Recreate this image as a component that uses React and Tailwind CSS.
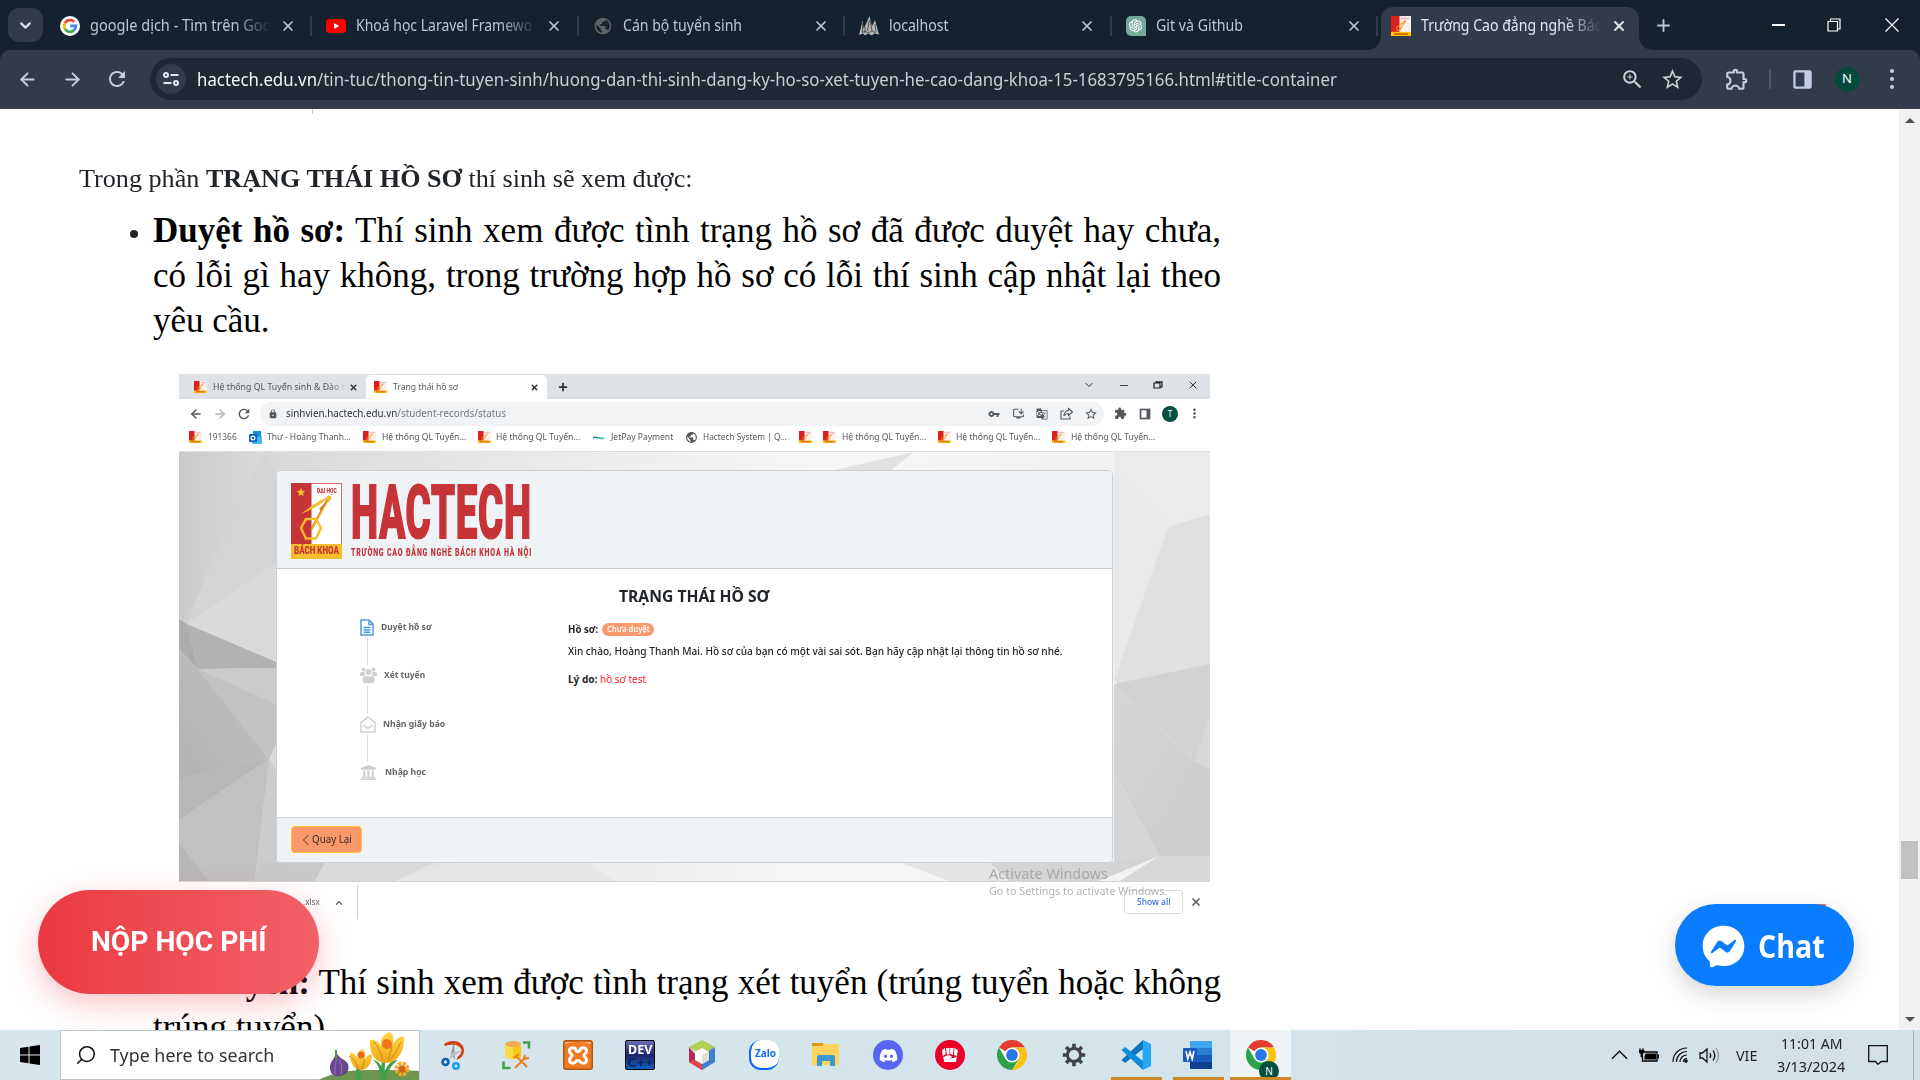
import React, { useLayoutEffect, useRef } from "react";
import {
  MdZoomIn, MdStarOutline, MdOutlineExtension, MdPublic, MdLock, MdRefresh,
  MdVpnKey, MdInstallDesktop, MdGTranslate, MdExtension, MdMoreVert,
} from "react-icons/md";
import { FaDiscord, FaFacebookMessenger, FaUniversity } from "react-icons/fa";
import { AiOutlineOpenAI } from "react-icons/ai";
import { ArrowLeft, ArrowRight, X, Plus, ChevronDown, ChevronUp, Search } from "lucide-react";

/* One line of text stretched to the width of its box. */
function Fit({ className = "", children }) {
  const outer = useRef(null);
  const inner = useRef(null);
  useLayoutEffect(() => {
    const apply = () => {
      if (!outer.current || !inner.current) return;
      const k = outer.current.clientWidth / inner.current.offsetWidth;
      inner.current.style.transform = `scaleX(${k})`;
    };
    apply();
    if (document.fonts) document.fonts.ready.then(apply);
  }, []);
  return (
    <span ref={outer} className={"flex shrink-0 whitespace-nowrap " + className}>
      <span ref={inner} className="block shrink-0 origin-left">{children}</span>
    </span>
  );
}

function SchoolIcon({ className }) {
  return (
    <svg viewBox="0 0 20 20" preserveAspectRatio="none" className={"shrink-0 " + className}>
      <rect width="20" height="20" fill="#fbeff0" />
      <rect width="8.5" height="16.5" fill="#dc1f1c" />
      <rect y="15.8" width="20" height="4.2" fill="#fbc70c" />
      <path d="M3 18h14" stroke="#d9481c" strokeWidth="1.4" />
      <path d="M10 2.5h8" stroke="#f3b8bd" strokeWidth="1.6" />
      <path d="M15 4.5 8 9.5M15 4.5 9 13" stroke="#ef9d21" strokeWidth="1.1" fill="none" />
      <circle cx="7.7" cy="12.4" r="2.2" stroke="#f5a31d" strokeWidth="1" fill="none" />
    </svg>
  );
}

function GoogleIcon() {
  return (
    <svg viewBox="0 0 20 20" className="h-5 w-5 shrink-0">
      <circle cx="10" cy="10" r="10" fill="#fff" />
      <g fill="none" strokeWidth="2.7">
        <path d="M14.2 5.9A5.9 5.9 0 0 0 4.900 7.100" stroke="#ea4335" />
        <path d="M4.900 7.100a5.900 5.900 0 0 0 0 5.800" stroke="#fbbc05" />
        <path d="M4.900 12.900a5.900 5.900 0 0 0 9 1.400" stroke="#34a853" />
        <path d="M13.900 14.300a5.900 5.900 0 0 0 2-4.400H10.200" stroke="#4285f4" />
      </g>
    </svg>
  );
}

function YoutubeIcon() {
  return (
    <svg viewBox="0 0 20 20" className="h-5 w-5 shrink-0">
      <rect y="3" width="20" height="14" rx="3.4" fill="#f00" />
      <path d="M8 7l5.2 3L8 13z" fill="#fff" />
    </svg>
  );
}

function LocalhostIcon() {
  return (
    <svg viewBox="0 0 20 20" className="h-5 w-5 shrink-0">
      <path d="M0 19 3.600 4.500 4.600 13 10.500 0 13 10 16 4l4 14.500-5-1-2 2-4-2-3 2-2-2z" fill="#b5b5b1" />
      <path d="M3.400 7v9M6 11v6M10.300 4 8.500 15M11 4l2 11M16 8l1 8M3 17l3-2 3 2 4-2 4 2" stroke="#3b4044" strokeWidth=".8" fill="none" />
    </svg>
  );
}

function GptIcon() {
  return (
    <span className="flex h-5 w-5 shrink-0 items-center justify-center rounded-tl-[5px] rounded-tr-[5px] rounded-bl-[5px] bg-[#74a99b] text-white">
      <AiOutlineOpenAI className="h-[17px] w-[17px]" />
    </span>
  );
}

const topTabs = [
  { icon: <GoogleIcon />, text: "google dịch - Tìm trên Goo", w: "w-[181px]", fade: true },
  { icon: <YoutubeIcon />, text: "Khoá học Laravel Framewo", w: "w-[176px]", fade: true },
  { icon: <MdPublic className="h-5 w-5 shrink-0 text-[#5f6468]" />, text: "Cán bộ tuyển sinh", w: "w-[119px]" },
  { icon: <LocalhostIcon />, text: "localhost", w: "w-[60px]" },
  { icon: <GptIcon />, text: "Git và Github", w: "w-[87px]" },
];

function TabStrip() {
  return (
    <div className="flex h-[50px] items-center bg-[#14212e] pl-2 text-[15.500px] text-[#b9c6dc]">
      <button className="flex h-[34px] w-[35px] items-center justify-center rounded-[11px] bg-[#2f3a4a]">
        <ChevronDown className="h-[17px] w-[17px] text-[#d5dff0]" strokeWidth={3.2} />
      </button>
      <div className="ml-[3px] flex pt-px">
        {topTabs.map((t) => (
          <div key={t.text} className="flex w-[266.400px] items-center pl-[14px]">
            {t.icon}
            <div className={"ml-[10px] w-[181px] overflow-hidden " + (t.fade ? "[mask-image:linear-gradient(to_right,#000_80%,transparent)]" : "")}>
              <Fit className={t.w}>{t.text}</Fit>
            </div>
            <X className="ml-[9px] h-4 w-4 shrink-0" strokeWidth={2.6} />
            <span className="ml-auto h-5 w-[2px] bg-[#303b4a]" />
          </div>
        ))}
      </div>
      <div className="relative ml-[3px] mt-[7px] flex h-[43px] w-[258px] shrink-0 items-center rounded-t-[12px] bg-[#313b4b] pb-[6px] pl-[10px] text-[#e3e8f0]">
        <svg viewBox="0 0 14 14" className="absolute bottom-0 -left-[14px] h-[14px] w-[14px]"><path d="M14 0v14H0A14 14 0 0 0 14 0z" fill="#313b4b" /></svg>
        <svg viewBox="0 0 14 14" className="absolute -right-[14px] bottom-0 h-[14px] w-[14px]"><path d="M0 0v14h14A14 14 0 0 1 0 0z" fill="#313b4b" /></svg>
        <SchoolIcon className="h-5 w-5" />
        <div className="ml-[10px] w-[180px] overflow-hidden [mask-image:linear-gradient(to_right,#000_80%,transparent)]">
          <Fit className="w-[180px]">Trường Cao đẳng nghề Bác</Fit>
        </div>
        <X className="ml-[10px] h-4 w-4 shrink-0" strokeWidth={2.8} />
      </div>
      <Plus className="ml-[15px] h-[19px] w-[19px]" strokeWidth={2.4} />
      <span className="ml-[99px] h-[1.500px] w-[13px] bg-white" />
      <svg viewBox="0 0 14 14" className="ml-[42px] h-[14px] w-[14px]" fill="none" stroke="#fff" strokeWidth="1.2"><path d="M1 3.500h9.500V13H1zM3.500 3V1H13v10h-2" /></svg>
      <svg viewBox="0 0 14 14" className="ml-[44px] h-[14px] w-[14px]" stroke="#fff" strokeWidth="1.2"><path d="M.5.5l13 13M13.500.5l-13 13" /></svg>
    </div>
  );
}

function Toolbar() {
  return (
    <div className="h-[59px] bg-[#14212e]">
      <div className="flex h-[59px] items-center rounded-t-[10px] border-b border-[#45434b] bg-[#313b4b] text-[#c0cee6]">
        <ArrowLeft className="ml-[17px] h-[21px] w-[21px]" strokeWidth={2.2} />
        <ArrowRight className="ml-[24px] h-[21px] w-[21px]" strokeWidth={2.2} />
        <MdRefresh className="ml-[22px] h-[24px] w-[24px]" />
        <div className="ml-[21px] flex h-[42px] w-[1552px] items-center rounded-full bg-[#1c2834] pl-[6px]">
          <span className="flex h-[30px] w-[30px] items-center justify-center rounded-full bg-[#313b4b]">
            <svg viewBox="0 0 16 14" className="h-[14px] w-[16px]" fill="none" stroke="#dfe6f2" strokeWidth="2"><circle cx="3" cy="3" r="2" /><path d="M7.500 3H15.500M.5 11h8" /><circle cx="13" cy="11" r="2" /></svg>
          </span>
          <Fit className="ml-[11px] w-[1140px] text-[17.500px] text-[#c9ced6]">
            <span className="text-[#f4f7fb]">hactech.edu.vn</span>/tin-tuc/thong-tin-tuyen-sinh/huong-dan-thi-sinh-dang-ky-ho-so-xet-tuyen-he-cao-dang-khoa-15-1683795166.html#title-container
          </Fit>
          <MdZoomIn className="ml-[283px] h-[25px] w-[25px] text-[#c9cdd6]" />
          <MdStarOutline className="ml-[15px] h-[25px] w-[25px] text-[#c9cdd6]" />
        </div>
        <MdOutlineExtension className="ml-[22px] h-[26px] w-[26px]" />
        <span className="ml-[19px] h-5 w-[1.500px] bg-[#4d5868]" />
        <svg viewBox="0 0 20 20" className="ml-[22px] h-[19px] w-[19px]"><rect x="1.500" y="1.500" width="17" height="17" rx="1" fill="none" stroke="#c0cee6" strokeWidth="2.400" /><path d="M12 1h7v18h-7z" fill="#c0cee6" /></svg>
        <span className="ml-[23px] flex h-[25px] w-[25px] items-center justify-center rounded-full bg-[#00493c] text-[13px] text-white">N</span>
        <svg viewBox="0 0 6 22" className="ml-[29px] h-[22px] w-[6px]" fill="#c0cee6"><circle cx="3" cy="3" r="2.100" /><circle cx="3" cy="11" r="2.100" /><circle cx="3" cy="19" r="2.100" /></svg>
      </div>
    </div>
  );
}

const bookmarks = [
  { k: "s", t: "191366", w: "w-[29px]", ml: "ml-[10px]" },
  { k: "o", t: "Thư - Hoàng Thanh...", w: "w-[84px]", ml: "ml-[12px]" },
  { k: "s", t: "Hệ thống QL Tuyển...", w: "w-[84px]", ml: "ml-[12px]" },
  { k: "s", t: "Hệ thống QL Tuyển...", w: "w-[84px]", ml: "ml-[12px]" },
  { k: "j", t: "JetPay Payment", w: "w-[62px]", ml: "ml-[12px]" },
  { k: "g", t: "Hactech System | Q...", w: "w-[84px]", ml: "ml-[12px]" },
  { k: "s", ml: "ml-[12px]" },
  { k: "s", t: "Hệ thống QL Tuyển...", w: "w-[84px]", ml: "ml-[11px]" },
  { k: "s", t: "Hệ thống QL Tuyển...", w: "w-[84px]", ml: "ml-[12px]" },
  { k: "s", t: "Hệ thống QL Tuyển...", w: "w-[84px]", ml: "ml-[12px]" },
];

function BookmarkIcon({ kind }) {
  if (kind === "o")
    return (
      <svg viewBox="0 0 13 13" className="h-[13px] w-[13px] shrink-0"><path d="M4 0h8v9H4z" fill="#1490df" /><path d="M3 7l10-2v8H3z" fill="#41b7f0" /><rect y="3" width="8" height="8" rx="1" fill="#0f63b8" /><circle cx="4" cy="7" r="1.900" stroke="#fff" strokeWidth="1.200" fill="none" /></svg>
    );
  if (kind === "j")
    return (
      <svg viewBox="0 0 13 13" className="h-[13px] w-[13px] shrink-0" fill="none" strokeWidth="1.600"><path d="M1 7c2-1.500 3-1 5 0" stroke="#4a74a8" /><path d="M6 6.500c3 1.500 4 1 6 .5" stroke="#2fc59c" /></svg>
    );
  if (kind === "g") return <MdPublic className="h-[13px] w-[13px] shrink-0 text-[#55595e]" />;
  return <SchoolIcon className="h-[12px] w-[13px]" />;
}

function InnerChrome() {
  return (
    <div className="font-['Noto_Sans',sans-serif] text-[9.500px] text-[#54585d]">
      <div className="flex h-[25px] items-center bg-[#dee1e6] pt-px">
        <SchoolIcon className="ml-[15px] h-[12px] w-[13px]" />
        <div className="ml-[6px] w-[133px] overflow-hidden [mask-image:linear-gradient(to_right,#000_88%,transparent)]">
          <Fit className="w-[132px]">Hệ thống QL Tuyển sinh &amp; Đào t</Fit>
        </div>
        <X className="ml-[3px] h-[9px] w-[9px] shrink-0 text-[#333]" strokeWidth={4} />
        <div className="ml-[8px] flex h-[24px] w-[181px] items-center rounded-t-[5px] bg-white pl-[8px]">
          <SchoolIcon className="h-[12px] w-[13px]" />
          <Fit className="ml-[6px] w-[65px]">Trạng thái hồ sơ</Fit>
          <X className="ml-[72px] h-[9px] w-[9px] text-[#333]" strokeWidth={4} />
        </div>
        <Plus className="ml-[10px] h-[12px] w-[12px] text-[#333]" strokeWidth={3.500} />
        <ChevronDown className="mb-[4px] ml-[514px] h-[12px] w-[12px] text-[#333]" />
        <span className="mb-[4px] ml-[25px] h-px w-[8px] bg-[#444]" />
        <svg viewBox="0 0 10 8" className="mb-[4px] ml-[25px] h-[8px] w-[10px]" fill="none" stroke="#222" strokeWidth="1.200"><path d="M1 2h6v5H1zM3 2V.8h6v5H7" /></svg>
        <X className="mb-[4px] ml-[24px] h-[12px] w-[12px] text-[#333]" strokeWidth={2} />
      </div>
      <div className="flex h-[29px] items-center bg-white">
        <ArrowLeft className="ml-[10px] h-[14px] w-[14px]" strokeWidth={2.600} />
        <ArrowRight className="ml-[10px] h-[14px] w-[14px] text-[#b3b6ba]" strokeWidth={2.400} />
        <MdRefresh className="ml-[9px] h-[16px] w-[16px]" />
        <div className="ml-[8px] flex h-[24px] w-[844px] items-center rounded-full bg-[#f1f3f4] pl-[8px]">
          <MdLock className="h-[10px] w-[10px]" />
          <Fit className="ml-[8px] w-[220px] text-[10px] text-[#75797e]"><span className="text-[#303338]">sinhvien.hactech.edu.vn</span>/student-records/status</Fit>
          <MdVpnKey className="ml-[482px] h-[12px] w-[12px]" />
          <MdInstallDesktop className="ml-[12px] h-[13px] w-[13px]" />
          <MdGTranslate className="ml-[11px] h-[12px] w-[12px]" />
          <svg viewBox="0 0 13 13" className="ml-[12px] h-[13px] w-[13px]" fill="none" stroke="#54585d" strokeWidth="1.100"><path d="M4 4H1v8h9V9.500M8.500 1.500l4 3.500-4 3.500V6.500C6.500 6.500 5 7 3.800 9c.2-3 2-5 4.700-5.500z" /></svg>
          <MdStarOutline className="ml-[11px] h-[14px] w-[14px]" />
        </div>
        <MdExtension className="ml-[10px] h-[13px] w-[13px]" />
        <svg viewBox="0 0 12 12" className="ml-[12px] h-[12px] w-[12px]"><rect x="1.500" y="1.500" width="9" height="9" fill="none" stroke="#54585d" strokeWidth="1.700" /><path d="M7.500 1.500h3v9h-3z" fill="#54585d" /></svg>
        <span className="ml-[11px] flex h-[16px] w-[16px] items-center justify-center rounded-full bg-[#04513f] text-[8px] text-white">T</span>
        <MdMoreVert className="ml-[9px] h-[15px] w-[15px]" />
      </div>
      <div className="flex h-[24px] items-center border-b border-[#d9dbde] bg-white pb-[5px]">
        {bookmarks.map((b, i) => (
          <div key={i} className={"flex items-center " + b.ml}>
            <BookmarkIcon kind={b.k} />
            {b.t && <Fit className={"ml-[5.500px] " + b.w}>{b.t}</Fit>}
          </div>
        ))}
      </div>
    </div>
  );
}

function Facets() {
  return (
    <svg viewBox="0 0 1031 429" className="absolute inset-0 h-full w-full" preserveAspectRatio="none">
      <defs>
        <linearGradient id="base" x1="0" x2="1" y1="0" y2="0">
          <stop offset="0" stopColor="#d2d2d2" /><stop offset=".28" stopColor="#e6e6e6" /><stop offset=".62" stopColor="#f7f7f7" /><stop offset="1" stopColor="#f0f0f0" />
        </linearGradient>
        <linearGradient id="left" x1="0" x2="1" y1="0" y2="0"><stop offset="0" stopColor="#cbcbcb" /><stop offset="1" stopColor="#dadada" /></linearGradient>
        <linearGradient id="dark" x1="0" x2="1" y1="1" y2="0"><stop offset="0" stopColor="#b2b2b2" /><stop offset="1" stopColor="#c3c3c3" /></linearGradient>
        <linearGradient id="right" x1="0" x2="1" y1="0" y2="1"><stop offset="0" stopColor="#d6d6d6" /><stop offset="1" stopColor="#cbcbcb" /></linearGradient>
      </defs>
      <rect width="1031" height="429" fill="url(#base)" />
      <path d="M0 0h85L30 118 8 172 0 167z" fill="url(#left)" />
      <path d="M30 118 85 0l12 18v192L8 172z" fill="#d5d5d5" />
      <path d="M8 172 97 110v100z" fill="#dadada" />
      <path d="M0 167l8 5 11 45-19-20z" fill="#acacac" />
      <path d="M8 172l89 38v6l-78 1z" fill="#b2b2b2" />
      <path d="M19 217l78-1v36z" fill="#cbcbcb" />
      <path d="M19 217l78 35v40l-7 15z" fill="#c2c2c2" />
      <path d="M0 197l19 20 71 90-90 20z" fill="url(#dark)" />
      <path d="M90 307 0 327v41z" fill="#b7b7b7" />
      <path d="M90 307 0 368v61h76z" fill="#c1c1c1" />
      <path d="M0 391l30 38H0z" fill="#b7b7b7" />
      <path d="M90 307l7 12v110H76z" fill="#cccccc" />
      <path d="M76 429l5-19h65l-10 19z" fill="#c9c9c9" />
      <path d="M146 410h110l-40 19h-80z" fill="#d9d9d9" />
      <path d="M216 429l60-19h130l30 19z" fill="#e6e6e6" />
      <path d="M655 18 735 0l-23 18z" fill="#e2e2e2" />
      <path d="M1031 62l-42 13-19 53-35 100V0h96z" fill="#ebebeb" />
      <path d="M1031 62l-42 13-54 153 4 4 92-20z" fill="#e0e0e0" />
      <path d="M935 18l54 57-19 53-35 100z" fill="#e9e9e9" />
      <path d="M935 232l96-20v49l-15 49z" fill="#d2d2d2" />
      <path d="M935 232l81 78 15-49v143h-51l-45-84z" fill="url(#right)" />
      <path d="M1031 261l-15 49 15 8z" fill="#d8d8d8" />
      <path d="M935 320l45 84-45 10z" fill="#d6d6d6" />
      <path d="M1016 310l15 8v86h-44z" fill="#cecece" />
      <path d="M980 404h51v25h-90z" fill="#d8d8d8" />
      <path d="M980 404l-60 25H830l-20-19h120z" fill="#d4d4d4" />
      <path d="M720 410h90l20 19h-60z" fill="#e4e4e4" />
    </svg>
  );
}

function Emblem() {
  return (
    <div className="relative h-[76px] w-[51px] overflow-hidden font-['Roboto',sans-serif] font-black text-[#c73437]">
      <svg viewBox="0 0 51 76" className="absolute inset-0 h-full w-full">
        <rect x=".5" y=".5" width="50" height="75" fill="#fff" stroke="#c73437" strokeWidth=".7" />
        <path d="M0 0h20.500v61H0z" fill="#c73437" />
        <path d="M0 61h51v15H0z" fill="#f4bd2e" />
        <path d="M10 5l1.200 2.800 3 .2-2.300 2 .7 3-2.600-1.600L7.400 13l.7-3-2.300-2 3-.2z" fill="#f6c62f" />
        <path d="M38 14C30 22 22 26 10 31 20 23 30 16 38 14z" fill="#f4bd2e" />
        <path d="M38 14 20 47M39 15 29 27" fill="none" stroke="#c77a2a" strokeWidth="2.200" />
        <path d="M39 14 21 46" stroke="#f4bd2e" strokeWidth="1.400" />
        <path d="M15 36h10l5 9-5 10.500H15L10 45z" fill="none" stroke="#f4bd2e" strokeWidth="2.400" />
        <circle cx="38" cy="15" r="2.500" fill="#f4bd2e" />
      </svg>
      <Fit className="absolute top-[4px] left-[26px] w-[20px] text-[7px] leading-[9px]">ĐẠI HỌC</Fit>
      <Fit className="absolute top-[61px] left-[3px] w-[45px] text-[11px] leading-[14px]">BÁCH KHOA</Fit>
    </div>
  );
}

function PeopleIcon() {
  return (
    <svg viewBox="0 0 17 17" className="h-[17px] w-[17px]" fill="#cfcfcf">
      <circle cx="3.500" cy="2.500" r="2" /><circle cx="13.500" cy="2.500" r="2" /><circle cx="8.500" cy="5" r="3" />
      <path d="M0 9V7q0-2 2-2h2.500q-.5 3 1.500 4zM17 9V7q0-2-2-2h-2.500q.5 3-1.500 4z" />
      <rect x="2.500" y="9.300" width="12" height="7" rx="2.500" />
    </svg>
  );
}

const steps = [
  { icon: <svg viewBox="0 0 14 17" className="h-[17px] w-[14px]" fill="none" stroke="#4d9be8" strokeWidth="1.500"><path d="M1 1h8l4 4v11H1zM9 1v4.500h4M3.500 8.500h7M3.500 11h7M3.500 13.300h7" /></svg>, text: "Duyệt hồ sơ", w: "w-[51px]", ml: "ml-[7px]" },
  { icon: <PeopleIcon />, text: "Xét tuyển", w: "w-[41px]", ml: "ml-[7px]" },
  { icon: <svg viewBox="0 0 16 17" className="h-[17px] w-[16px]" fill="none" stroke="#cfcfcf" strokeWidth="1.500"><path d="M1 6.500 8 1l7 5.500V16H1zM3.500 9 8 12.500 12.500 9" /></svg>, text: "Nhận giấy báo", w: "w-[62px]", ml: "ml-[7px]" },
  { icon: <FaUniversity className="h-[17px] w-[17px] text-[#cfcfcf]" />, text: "Nhập học", w: "w-[41px]", ml: "ml-[8px]" },
];

function InnerPage() {
  return (
    <div className="relative h-[430px] border-b border-[#d4d4d4] pt-[18px] font-['Noto_Sans',sans-serif]">
      <Facets />
      <div className="relative mr-[97px] ml-[97px] flex h-[393px] flex-col overflow-hidden rounded-[5px] border border-[#c8d1d8] bg-white">
        <div className="flex h-[98px] border-b border-[#c8d1d8] bg-[#eff3f6] pt-[12px] pl-[14px]">
          <Emblem />
          <div className="ml-[9px] flex flex-col font-['Roboto',sans-serif] text-[#c73437]">
            <Fit className="mt-[2px] h-[56px] w-[181px] items-center text-[74.500px] leading-[56px] font-extrabold tracking-[1.500px] [-webkit-text-stroke:2.200px_#c73437]">HACTECH</Fit>
            <Fit className="mt-[4px] w-[181px] text-[10.500px] leading-[15px] font-black tracking-[1.200px]">TRƯỜNG CAO ĐẲNG NGHỀ BÁCH KHOA HÀ NỘI</Fit>
          </div>
        </div>
        <div className="flex flex-1 flex-col">
          <div className="mt-[14px] flex justify-center">
            <Fit className="w-[151px] text-[16px] leading-[26px] font-bold text-[#212529]">TRẠNG THÁI HỒ SƠ</Fit>
          </div>
          <div className="flex">
            <div className="mt-[9px] ml-[83px] w-[208px]">
              {steps.map((s, i) => (
                <div key={s.text}>
                  <div className="flex h-[18px] items-center">
                    {s.icon}
                    <Fit className={"text-[9.500px] font-bold text-[#666] " + s.w + " " + s.ml}>{s.text}</Fit>
                  </div>
                  {i < 3 && <div className="my-[1.500px] ml-[7px] h-[27.500px] w-px bg-[#dcdcdc]" />}
                </div>
              ))}
            </div>
            <div className="mt-[11px] text-[10px] leading-[18px] text-[#212529]">
              <div className="flex items-center">
                <Fit className="w-[30px] font-bold">Hồ sơ:</Fit>
                <span className="ml-[4px] flex h-[13px] w-[52px] items-center justify-center rounded-full bg-[#fa996d]">
                  <Fit className="w-[43px] text-[9px] font-semibold text-white">Chưa duyệt</Fit>
                </span>
              </div>
              <Fit className="mt-[4px] w-[495px] font-medium">Xin chào, Hoàng Thanh Mai. Hồ sơ của bạn có một vài sai sót. Bạn hãy cập nhật lại thông tin hồ sơ nhé.</Fit>
              <div className="mt-[10px] flex">
                <Fit className="w-[29px] font-bold">Lý do:</Fit>
                <Fit className="ml-[3px] w-[46px] text-[#fb1e2e]">hồ sơ test</Fit>
              </div>
            </div>
          </div>
        </div>
        <div className="flex h-[45px] items-start border-t border-[#d3dae0] bg-[#eff3f6] pt-[8px] pl-[14px]">
          <button className="flex h-[27px] w-[71px] items-center rounded-[4px] border border-[#ffbf33] bg-[#fb986a] pl-[10px] text-[10.500px] text-[#33302e]">
            <svg viewBox="0 0 8 12" className="h-[12px] w-[8px]" fill="none" stroke="#33302e"><path d="M6.500 1 1.500 6l5 5" /></svg>
            <Fit className="ml-[2px] w-[40px]">Quay Lại</Fit>
          </button>
        </div>
      </div>
      <Fit className="absolute top-[411px] left-[810px] w-[119px] text-[14.500px] leading-[20px] text-[#a9a9a9]">Activate Windows</Fit>
    </div>
  );
}

function DownloadBar() {
  return (
    <div className="relative flex h-[39px] items-center bg-white font-['Noto_Sans',sans-serif] text-[9.500px] text-[#5f6368]">
      <Fit className="mt-[2px] ml-[124px] w-[17px]">.xlsx</Fit>
      <ChevronUp className="mt-[2px] ml-[14px] h-[10px] w-[10px]" strokeWidth={3} />
      <span className="ml-[13px] h-[34px] w-px bg-[#d0d0d0]" />
      <div className="ml-[766px] flex h-[24px] w-[59px] items-center justify-center rounded-[3px] border border-[#dcdcdf]">
        <Fit className="w-[34px] text-[9px] font-medium text-[#2f6fe4]">Show all</Fit>
      </div>
      <X className="ml-[7px] h-[12px] w-[12px]" strokeWidth={3.500} />
      <Fit className="absolute top-[1px] left-[810px] w-[178px] text-[11px] leading-[16px] text-[#b4b4b4]">Go to Settings to activate Windows.</Fit>
    </div>
  );
}

function Article() {
  return (
    <div className="pt-[51px] pl-[79px] font-['Liberation_Serif',serif]">
      <p className="text-[25px] leading-[38px] text-[#212529]">
        <Fit className="w-[614px]">Trong phần <b>TRẠNG THÁI HỒ SƠ</b> thí sinh sẽ xem được:</Fit>
      </p>
      <div className="mt-[10px] flex items-start">
        <span className="mt-[22px] ml-[51px] h-[8px] w-[8px] rounded-full bg-[#212529]" />
        <p className="ml-[15px] w-[1068px] text-justify text-[35px] leading-[45px] text-black">
          <b>Duyệt hồ sơ:</b> Thí sinh xem được tình trạng hồ sơ đã được duyệt hay chưa, có lỗi gì hay không, trong trường hợp hồ sơ có lỗi thí sinh cập nhật lại theo yêu cầu.
        </p>
      </div>
      <div className="mt-[31px] ml-[100px] w-[1031px]">
        <InnerChrome />
        <InnerPage />
        <DownloadBar />
      </div>
      <p className="mt-[39px] ml-[74px] w-[1068px] text-justify text-[35px] leading-[45px] text-black">
        <b>Xét tuyển:</b> Thí sinh xem được tình trạng xét tuyển (trúng tuyển hoặc không trúng tuyển)
      </p>
    </div>
  );
}

function PageArea() {
  return (
    <div className="flex h-[921px] bg-white">
      <div className="relative h-[921px] w-[1899px] overflow-hidden">
        <span className="absolute top-0 left-[312px] h-[5px] w-px bg-[#c9c9c9]" />
        <Article />
        <button className="absolute top-[781px] left-[38px] flex h-[104px] w-[281px] items-center justify-center rounded-full bg-linear-to-r from-[#ec3840] to-[#f26068] pb-[1px] font-['Roboto',sans-serif] text-[28px] font-bold text-white shadow-[0_10px_30px_rgba(240,60,70,0.3)]">
          <Fit className="w-[175px]">NỘP HỌC PHÍ</Fit>
        </button>
        <span className="absolute top-[795px] left-[1812px] h-[12px] w-[14px] bg-[#ef6f62]" />
        <button className="absolute top-[795px] left-[1675px] flex h-[82px] w-[179px] items-center rounded-full bg-[#0a7cff] pt-[2px] pl-[27px] font-['Open_Sans',sans-serif] text-[32px] font-bold text-white shadow-[0_8px_24px_rgba(0,0,0,0.17)]">
          <FaFacebookMessenger className="h-[43px] w-[43px]" />
          <Fit className="ml-[13px] w-[67px]">Chat</Fit>
        </button>
      </div>
      <div className="flex w-[21px] flex-col items-center bg-[#f1f1f1]">
        <svg viewBox="0 0 10 5" className="mt-[9px] h-[5px] w-[10px]"><path d="M0 5 5 0l5 5z" fill="#505050" /></svg>
        <span className="mt-[718px] h-[38px] w-[17px] bg-[#c1c1c1]" />
        <svg viewBox="0 0 10 5" className="mt-[138px] h-[5px] w-[10px]"><path d="M0 0l5 5 5-5z" fill="#505050" /></svg>
      </div>
    </div>
  );
}

function Flowers() {
  return (
    <svg viewBox="0 0 100 48" className="h-[48px] w-[100px]">
      <defs><linearGradient id="petal" x1="0" x2="0" y1="0" y2="1"><stop offset="0" stopColor="#ffd84a" /><stop offset="1" stopColor="#f0a712" /></linearGradient></defs>
      <path d="M0 48c12-7 30-10 50-10 22 0 38 0 50 1v9z" fill="#6a9650" />
      <path d="M40 48c1-8-4-14-7-15 6 1 9 6 10 10M62 46c-2-12-4-16-9-18 6 0 11 6 12 14 2-8 7-14 14-14-7 5-11 12-12 20z" fill="#3fa24a" />
      <path d="M39 28v20M65 24l-2 24" stroke="#3fa24a" strokeWidth="3.500" />
      <path d="M17 19c0 8-7 10-6 18 1 6 5 8 10 7 7-1 10-6 8-12-2-5-9-4-12-13z" fill="#67488f" />
      <path d="M17 23c1 7-2 13-1 20M19 27c4 5 4 9 3 15" stroke="#9374b5" fill="none" />
      <path d="M17 18v8" stroke="#4c9b48" strokeWidth="2" />
      <path d="M31 21c3-1 6 2 8 6 0-7 2-10 5-10 3 3 2 7 2 10 3-5 5-5 7-4 0 8-4 15-11 15s-12-9-11-17z" fill="url(#petal)" />
      <path d="M30 24c5 2 7 8 10 13M46 27l-3 10" stroke="#cf8812" fill="none" />
      <circle cx="42" cy="23" r="3.500" fill="#ef6a16" />
      <path d="M51 8c5-1 9 3 11 6C61 6 66 1 71 0c4 3 4 8 3 13 3-7 7-9 11-8 1 13-6 26-18 26S50 19 51 8z" fill="url(#petal)" />
      <path d="M55 10c5 6 7 11 9 19M73 14l-4 15M82 10c-4 8-7 14-12 19" stroke="#cf8812" fill="none" />
      <circle cx="68" cy="12" r="5" fill="#f4741c" />
      <circle cx="83" cy="37" r="5.500" fill="none" stroke="#f3a925" strokeWidth="4" strokeDasharray="3.200 1.100" />
      <circle cx="83" cy="37" r="3.500" fill="#cf651b" />
    </svg>
  );
}

function ChromeLogo() {
  return (
    <svg viewBox="0 0 30 30" className="h-[30px] w-[30px]">
      <circle cx="15" cy="15" r="15" fill="#fff" />
      <path d="M15 15 2 7.500A15 15 0 0 1 28 7.500H15z" fill="#e33b2e" />
      <path d="M28 7.500A15 15 0 0 1 15 30l6.500-11.200L15 7.500z" fill="#fbc116" />
      <path d="M2 7.500A15 15 0 0 0 15 30l6.500-11.200L15 15 8.500 18.800z" fill="#2da14c" />
      <circle cx="15" cy="15" r="7.500" fill="#fff" />
      <circle cx="15" cy="15" r="5.900" fill="#2877e8" />
    </svg>
  );
}

const taskIcons = [
  { n: "snip", el: <svg viewBox="0 0 30 30" className="h-[30px] w-[30px]" fill="none"><path d="M5 4C12-1 24 0 25 10c0 6-4 9-8 10l1-3c4-2 5-5 4-8C20 4 12 4 6 6z" fill="#d23b0c" /><path d="M15 2l1 18-4-6z" fill="#8f979d" /><path d="M16 2l1 19 2-5z" fill="#e4e8ea" /><path d="M24 10 9 20l4-7z" fill="#b9c0c5" /><circle cx="6.500" cy="22" r="3" stroke="#0d5fae" strokeWidth="2.600" /><circle cx="17" cy="26" r="2.800" stroke="#1f9ce8" strokeWidth="2.400" /></svg> },
  { n: "dbtools", el: <svg viewBox="0 0 30 30" className="h-[30px] w-[30px]" fill="none"><path d="M4 4v13c3 3 13 3 16 0V4z" fill="#fbdc4a" /><path d="M12 6h8v11q-3 2-8 2z" fill="#f9c913" /><ellipse cx="12" cy="4" rx="8" ry="3" fill="#f0a955" /><path d="M22 2.500h6v6M2.500 21.500v6.500h7" stroke="#3fa14a" strokeWidth="2.600" /><path d="M16 17l10 10M25 17 14 28M13 18l5-4M24 15l-1 4 5-1" stroke="#f07e1c" strokeWidth="2" /></svg> },
  { n: "xampp", el: <svg viewBox="0 0 30 30" className="h-[30px] w-[30px]" fill="none"><rect width="30" height="30" rx="3" fill="#b5550f" /><rect x="1.500" y="1.500" width="27" height="27" rx="2" fill="#f17a24" /><path d="M2 4q13-4 26 0V2H2z" fill="#f7b787" /><path d="M12.500 8.500C9 6.500 6 8.500 6.500 11.500 7 14 9 14 9 15.500S6 17.500 6.500 20.500s4 3.500 6 1.500c1-2 4-2 5 0 2 2 5.500 1.500 6-1.500s-2.500-3.500-2.500-5 2-1.500 2.500-4c.5-3-2.500-5-6-3-.5 4-4.500 4-5 0z" stroke="#fff" strokeWidth="3" strokeLinejoin="round" /></svg> },
  { n: "dev", el: <span className="flex h-[30px] w-[30px] flex-col items-center overflow-hidden rounded-[2px] border border-black bg-linear-to-b from-[#6a70b8] via-[#1c2468] via-50% to-[#0b62c8] text-[12px] leading-[15px] font-bold"><Fit className="mt-[2px] h-[13px] w-[24px] leading-[13px] text-white">DEV</Fit><Fit className="h-[13px] w-[26px] leading-[13px] text-[#062a5e]">C++</Fit></span> },
  { n: "cube", el: <svg viewBox="0 0 30 30" className="h-[30px] w-[30px]"><path d="M15 0l13 7-13 8L2 7z" fill="#b4cf58" /><path d="M2 7v15l13 8v-8z" fill="#b42d59" /><path d="M2 22l13 8v-7l-7-4z" fill="#e2434c" /><path d="M28 7v15l-13 8V15z" fill="#3f7fcb" /><path d="M15 8l7 4v8l-7 4-7-4v-8z" fill="#fff" /><path d="M15 15l7-4v9l-7 4z" fill="#dedfd6" /></svg> },
  { n: "zalo", el: <span className="flex h-[30px] w-[30px] items-center justify-center rounded-[12px] border-b-2 border-l-2 border-[#0a68f5] bg-white"><Fit className="w-[21px] text-[10.500px] font-bold text-[#0c6bf3]">Zalo</Fit></span> },
  { n: "folder", el: <svg viewBox="0 0 30 30" className="h-[30px] w-[30px]"><path d="M1 3h11l2 4H1z" fill="#dc9a07" /><path d="M1 6h10l3-2h14v21H1z" fill="#ffd35e" /><path d="M6 26V17q0-2 2-2h14q2 0 2 2v9h-5v-5h-8v5z" fill="#3c98d0" /></svg> },
  { n: "discord", el: <span className="flex h-[30px] w-[30px] items-center justify-center rounded-full bg-[#5865f2] text-white"><FaDiscord className="h-[19px] w-[19px]" /></span> },
  { n: "fist", el: <svg viewBox="0 0 30 30" className="h-[30px] w-[30px]" fill="#fff"><circle cx="15" cy="15" r="15" fill="#eb0029" /><path d="M7 10l3-2 .8 6-3 2zM11 8h3.500v6L12 15zM15.200 8h3.300l-.5 7-2.800-1zM19.300 8l3.500 2-.8 6-3-1zM8 17l6-2 3.500 2-3 1.500 4-.5 3.500-1.500-1 5.500H9.500z" /></svg> },
  { n: "chrome", el: <ChromeLogo /> },
  { n: "settings", el: <svg viewBox="0 0 24 24" className="h-[24px] w-[24px]" fill="none" stroke="#414549"><circle cx="12" cy="12" r="6.600" strokeWidth="3" /><path d="M12 .8V5M12 19v4.200M.8 12H5M19 12h4.200M4.100 4.100 7 7M17 17l2.900 2.900M19.900 4.100 17 7M7 17l-2.900 2.900" strokeWidth="3.600" /></svg> },
  { n: "code", line: true, el: <svg viewBox="0 0 30 30" className="h-[30px] w-[30px]"><path d="M22 0l8 4v22l-8 4-.5-8V8z" fill="#24a9f2" /><path d="M22 0v9L4 23l-3.500-3z" fill="#0a74bd" /><path d="M22 30v-9L4 7 .5 10z" fill="#108dd6" /></svg> },
  { n: "word", line: true, el: <svg viewBox="0 0 30 30" className="h-[30px] w-[30px]"><path d="M7 1h22v8H7z" fill="#41a5ee" /><path d="M7 8h22v7H7z" fill="#2b7cd3" /><path d="M7 15h22v7H7z" fill="#185abd" /><path d="M7 22h22v7H7z" fill="#103f91" /><rect y="8" width="14" height="14" rx="1" fill="#185abd" /><path d="M3 11l1.800 8L7 12l2.200 7L11 11" stroke="#fff" strokeWidth="1.600" fill="none" /></svg> },
];

function Taskbar() {
  return (
    <div className="flex h-[50px] items-center bg-linear-to-r from-[#d8e6ed] via-[#d3e5ea] to-[#d2e0e8]">
      <svg viewBox="0 0 20 20" className="ml-[20px] h-5 w-5 shrink-0"><path d="M0 3l8.500-1.300V9.500H0zM9.500 1.500 20 0v9.500H9.500zM0 10.500h8.500v7.800L0 17zM9.500 10.500H20V20L9.500 18.500z" /></svg>
      <div className="ml-[20px] flex h-[50px] w-[360px] items-center border border-[#bfc7cb] bg-white pl-[14px]">
        <Search className="h-[22px] w-[22px] -scale-x-100 text-[#111]" strokeWidth={1.700} />
        <Fit className="ml-[13px] w-[164px] text-[18.500px] text-[#333]">Type here to search</Fit>
        <div className="mt-[2px] ml-auto"><Flowers /></div>
      </div>
      <div className="ml-[3px] flex">
        {taskIcons.map((t) => (
          <div key={t.n} className="relative flex h-[50px] w-[62px] items-center justify-center">
            {t.el}
            {t.line && <span className="absolute bottom-0 h-[3px] w-[51px] bg-[#cb8929]" />}
          </div>
        ))}
        <div className="relative ml-[1px] flex h-[50px] w-[61px] items-center justify-center bg-[#eef3f5]">
          <ChromeLogo />
          <span className="absolute right-[12px] bottom-[-1px] flex h-[20px] w-[20px] items-center justify-center rounded-full bg-[#04503f] text-[10px] text-white">N</span>
          <span className="absolute bottom-0 h-[3px] w-[61px] bg-[#cb8929]" />
        </div>
      </div>
      <svg viewBox="0 0 18 10" className="ml-[320px] h-[10px] w-[17px] shrink-0" fill="none" stroke="#111" strokeWidth="1.600"><path d="M1 9l8-8 8 8" /></svg>
      <svg viewBox="0 0 20 14" className="ml-[11px] h-[14px] w-[20px] shrink-0"><path d="M5 4h13v9H3.500V8" fill="none" stroke="#000" strokeWidth="1.300" /><path d="M6.500 5.500H17v6H5.500V8z" /><path d="M18.500 6.500h1.500v4h-1.500z" /><path d="M1 0v2M4 0v2M0 2h5v2.500L3.500 6v3H2V6L0 4.500z" stroke="#000" strokeWidth=".8" /></svg>
      <svg viewBox="0 0 16 16" className="ml-[13px] h-[16px] w-[16px] shrink-0" fill="none" stroke="#111" strokeWidth="1.200"><path d="M1 15C1 7 7 1 15 1M4.500 15C4.500 9 9 4.500 15 4.500M8 15c0-4 3-7 7-7" /><path d="M11.500 15c0-2 1.500-3.500 3.500-3.500" /><circle cx="14" cy="14" r="1.200" fill="#000" /></svg>
      <svg viewBox="0 0 21 17" className="ml-[11px] h-[17px] w-[21px] shrink-0" fill="none" stroke="#111" strokeWidth="1.300"><path d="M1 6v5h2.500L8 15V2L3.500 6zM11 6q1.500 2.500 0 5M14 3.500q3.500 5 0 10" /><path d="M17 1q5 7.500 0 15" stroke="#8f9a9f" /></svg>
      <Fit className="ml-[16px] w-[21px] text-[15px] text-[#222]">VIE</Fit>
      <div className="ml-[20px] flex w-[68px] flex-col items-center text-[15px] leading-[23px] text-[#222]">
        <Fit className="w-[61px]">11:01 AM</Fit>
        <Fit className="w-[68px]">3/13/2024</Fit>
      </div>
      <svg viewBox="0 0 20 20" className="ml-[23px] h-5 w-5 shrink-0" fill="none" stroke="#111" strokeWidth="1.300"><path d="M.7.700h18.600v15.800h-6L10 19.300l-2.500-2.800H.7z" /></svg>
      <span className="ml-[25px] h-[50px] w-px bg-[#a5b3ba]" />
    </div>
  );
}

export default function App() {
  return (
    <div className="flex h-[1080px] w-[1920px] flex-col overflow-hidden bg-white font-['Noto_Sans','Open_Sans',sans-serif]">
      <TabStrip />
      <Toolbar />
      <PageArea />
      <Taskbar />
    </div>
  );
}
